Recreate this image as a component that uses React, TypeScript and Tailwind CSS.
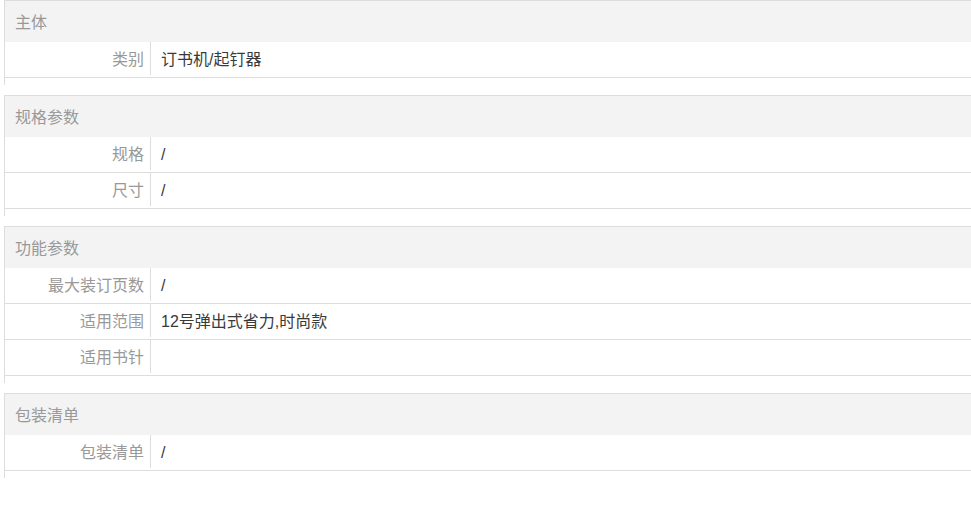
import React from "react";

type Row = { label: string; value: string };
type Section = { title: string; rows: Row[] };

const sections: Section[] = [
  { title: "主体", rows: [{ label: "类别", value: "订书机/起钉器" }] },
  {
    title: "规格参数",
    rows: [
      { label: "规格", value: "/" },
      { label: "尺寸", value: "/" },
    ],
  },
  {
    title: "功能参数",
    rows: [
      { label: "最大装订页数", value: "/" },
      { label: "适用范围", value: "12号弹出式省力,时尚款" },
      { label: "适用书针", value: "" },
    ],
  },
  { title: "包装清单", rows: [{ label: "包装清单", value: "/" }] },
];

export default function App() {
  return (
    <div
      className="w-[971px] h-[521px] bg-white pl-[4px] overflow-hidden text-[16px]"
      style={{ fontFamily: '"Liberation Sans", "Noto Sans CJK SC", sans-serif' }}
    >
      {sections.map((s) => (
        <div key={s.title} className="border-l border-t border-[#dddddd] pb-[7px] mb-[10px]">
          <div className="h-[41px] bg-[#f3f3f3] flex items-center pl-[10px] pt-[3px] text-[#999999]">
            {s.title}
          </div>
          {s.rows.map((r) => (
            <div key={r.label} className="h-[36px] border-b border-[#dddddd] flex items-start">
              <div className="w-[146px] h-[33px] border-r border-[#dddddd] flex items-center justify-end pr-[6px] pt-[2px] text-[#999999] shrink-0">
                {r.label}
              </div>
              <div className="h-[33px] flex items-center pl-[10px] pt-[2px] text-[#3a3a3a]">{r.value}</div>
            </div>
          ))}
        </div>
      ))}
    </div>
  );
}
